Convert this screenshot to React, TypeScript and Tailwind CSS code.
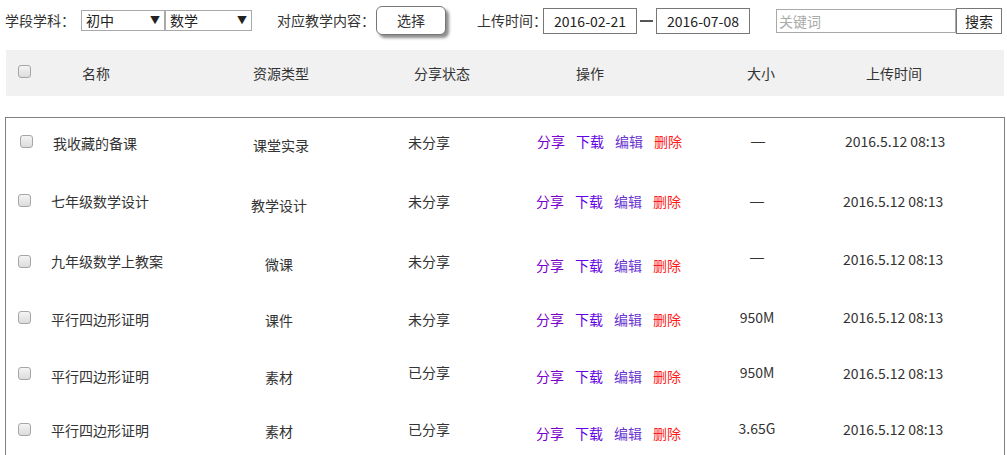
import React from 'react';

type Row = {
  name: string;
  type: string;
  status: string;
  size: string;
  h: string;
  cb: string;
  nm: string;
  ty: string;
  st: string;
  op: string;
  sz: string;
  dt: string;
};

const rows: Row[] = [
  { name: '我收藏的备课', type: '课堂实录', status: '未分享', size: '—', h: 'h-[58px]', cb: 'mt-[18px] ml-[14px]', nm: 'mt-[16px] pl-[8px]', ty: 'mt-[18px] pl-[4px]', st: 'mt-[15px]', op: 'mt-[14px] pl-[7px]', sz: 'mt-[14px] pl-[2px]', dt: 'mt-[14px] pl-[28px]' },
  { name: '七年级数学设计', type: '教学设计', status: '未分享', size: '—', h: 'h-[60px]', cb: 'mt-[19px] ml-[12px]', nm: 'mt-[16px] pl-[6px]', ty: 'mt-[20px]', st: 'mt-[16px]', op: 'mt-[16px] pl-[6px]', sz: 'mt-[16px]', dt: 'mt-[16px] pl-[26px]' },
  { name: '九年级数学上教案', type: '微课', status: '未分享', size: '—', h: 'h-[58px]', cb: 'mt-[20px] ml-[12px]', nm: 'mt-[16px] pl-[6px]', ty: 'mt-[19px]', st: 'mt-[16px]', op: 'mt-[20px] pl-[6px]', sz: 'mt-[12px]', dt: 'mt-[14px] pl-[26px]' },
  { name: '平行四边形证明', type: '课件', status: '未分享', size: '950M', h: 'h-[57px]', cb: 'mt-[18px] ml-[12px]', nm: 'mt-[16px] pl-[6px]', ty: 'mt-[17px]', st: 'mt-[16px]', op: 'mt-[16px] pl-[6px]', sz: 'mt-[14px]', dt: 'mt-[14px] pl-[26px]' },
  { name: '平行四边形证明', type: '素材', status: '已分享', size: '950M', h: 'h-[55px]', cb: 'mt-[17px] ml-[12px]', nm: 'mt-[16px] pl-[6px]', ty: 'mt-[17px]', st: 'mt-[12px]', op: 'mt-[16px] pl-[6px]', sz: 'mt-[12px]', dt: 'mt-[13px] pl-[26px]' },
  { name: '平行四边形证明', type: '素材', status: '已分享', size: '3.65G', h: 'h-[58px]', cb: 'mt-[18px] ml-[12px]', nm: 'mt-[15px] pl-[6px]', ty: 'mt-[16px]', st: 'mt-[14px]', op: 'mt-[18px] pl-[6px]', sz: 'mt-[13px]', dt: 'mt-[14px] pl-[26px]' },
];

function Check({ className = '' }: { className?: string }) {
  return (
    <span
      className={`block w-[13px] h-[13px] rounded-[3px] border border-[#a6a6a6] bg-gradient-to-b from-[#f4f4f4] to-[#dcdcdc] ${className}`}
    />
  );
}

function FakeSelect({ value, width }: { value: string; width: string }) {
  return (
    <div className={`${width} h-[21px] border border-[#a9a9a9] bg-white flex items-center justify-between pl-[4px] pr-[4px] text-[14px] text-[#222]`}>
      <span>{value}</span>
      <span className="text-[10px] leading-none text-[#222]">▼</span>
    </div>
  );
}

export default function App() {
  return (
    <div
      className="w-[1007px] h-[455px] overflow-hidden bg-white text-[14px] leading-[20px] text-[#333]"
      style={{ fontFamily: '"Noto Sans CJK SC", "Noto Sans", sans-serif' }}
    >
      {/* 筛选栏 */}
      <div className="h-[40px] flex items-center pl-[5px]">
        <span>学段学科：</span>
        <div className="ml-[6px] flex">
          <FakeSelect value="初中" width="w-[84px]" />
          <FakeSelect value="数学" width="w-[87px]" />
        </div>
        <span className="ml-[25px]">对应教学内容：</span>
        <button className="ml-[1px] w-[70px] h-[29px] rounded-[6px] border border-[#777] bg-white shadow-[3px_3px_3px_rgba(0,0,0,0.45)] text-[#333]">
          选择
        </button>
        <span className="ml-[31px]">上传时间：</span>
        <div className="ml-[-4px] mt-[2px] w-[94px] h-[26px] border border-[#777] flex items-center justify-center text-[#222]">
          2016-02-21
        </div>
        <span className="mx-[3px] mt-[2px] w-[13px] h-[2px] bg-[#555]" />
        <div className="mt-[2px] w-[94px] h-[26px] border border-[#777] flex items-center justify-center text-[#222]">
          2016-07-08
        </div>
        <div className="ml-[26px] mt-[2px] w-[180px] h-[24px] border border-[#a9a9a9] flex items-center pl-[2px] text-[#aaa]">
          关键词
        </div>
        <button className="mt-[2px] w-[46px] h-[26px] border border-[#777] bg-white text-[#222]">
          搜索
        </button>
      </div>

      {/* 表头 */}
      <div className="ml-[6px] mt-[10px] w-[998px] h-[46px] bg-[#f1f1f1] flex items-center">
        <div className="w-[30px] pl-[12px]">
          <Check className="mt-[-3px]" />
        </div>
        <div className="w-[120px] text-center">名称</div>
        <div className="ml-[65px] w-[120px] text-center">资源类型</div>
        <div className="ml-[41px] w-[120px] text-center">分享状态</div>
        <div className="ml-[28px] w-[120px] text-center">操作</div>
        <div className="ml-[51px] w-[120px] text-center">大小</div>
        <div className="ml-[13px] w-[120px] text-center">上传时间</div>
      </div>

      {/* 列表 */}
      <div className="ml-[5px] mt-[21px] w-[1000px] border-t border-l border-r border-[#808080] h-[400px]">
        <div className="mt-[-1px]">
          {rows.map((r, i) => (
            <div key={i} className={`flex items-start ${r.h}`}>
              <div className="w-[39px]">
                <Check className={r.cb} />
              </div>
              <div className={`w-[166px] ${r.nm}`}>{r.name}</div>
              <div className={`w-[136px] text-center ${r.ty}`}>{r.type}</div>
              <div className={`w-[183px] pl-[61px] ${r.st}`}>{r.status}</div>
              <div className={`w-[167px] flex gap-[11px] ${r.op}`}>
                <a className="text-[#7b00cc]">分享</a>
                <a className="text-[#6200e6]">下载</a>
                <a className="text-[#6a35d0]">编辑</a>
                <a className="text-[#ff1a1a]">删除</a>
              </div>
              <div
                className={`w-[120px] text-center ${r.sz}`}
                style={r.size === '—' ? { fontFamily: '"Liberation Sans", sans-serif' } : undefined}
              >
                {r.size}
              </div>
              <div className={`flex-1 ${r.dt}`}>2016.5.12 08:13</div>
            </div>
          ))}
        </div>
      </div>
    </div>
  );
}
